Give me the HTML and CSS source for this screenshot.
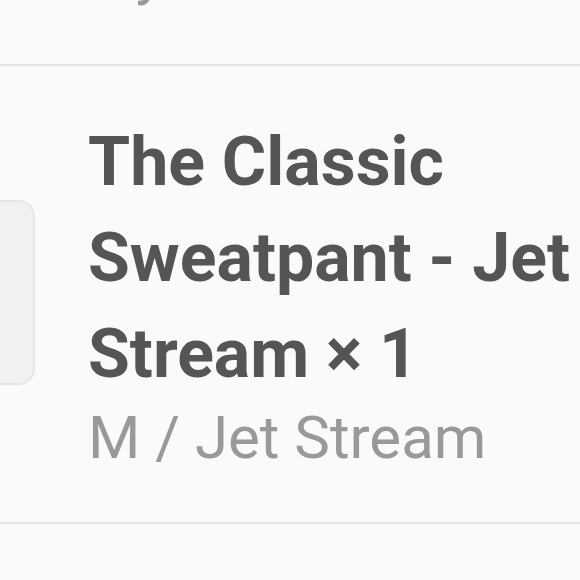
FILE: index.html
```html
<!DOCTYPE html>
<html lang="en">
<head>
    <meta charset="UTF-8">
    <meta name="viewport" content="width=device-width, initial-scale=1.0">
    <title>Order summary</title>
    <link rel="stylesheet" href="styles.css">
</head>
<body>
<div class="summary">
    <div class="line-item prev">
        <div class="variant prev-variant">Ivy</div>
    </div>
    <div class="line-item">
        <div class="thumb"></div>
        <div class="details">
            <div class="name">The Classic Sweatpant - Jet Stream × 1</div>
            <div class="variant">M / Jet Stream</div>
        </div>
    </div>
</div>
</body>
</html>
```

FILE: styles.css
```css
body {
    margin: 0;
    background-color: #fafafa;
    font-family: Roboto, "Liberation Sans", sans-serif;
    overflow: hidden;
}

.summary {
    width: 580px;
}

.line-item {
    display: flex;
    align-items: center;
    gap: 53px;
    height: 458px;
    box-sizing: border-box;
    border-bottom: 2px solid #e3e3e3;
}

.prev {
    display: flow-root;
    height: 66px;
    padding-left: 90px;
}

.prev-variant {
    margin-top: -63px;
    line-height: 60px;
}

.thumb {
    flex: none;
    width: 185px;
    height: 185px;
    margin-left: -150px;
    margin-top: -4px;
    box-sizing: border-box;
    background-color: #f1f1f1;
    border: 2px solid #e6e6e6;
    border-radius: 16px;
}

.details {
    width: 490px;
}

.name {
    font-size: 68px;
    line-height: 96px;
    font-weight: bold;
    color: #555;
}

.variant {
    font-size: 60px;
    line-height: 72px;
    color: #999;
}
```
